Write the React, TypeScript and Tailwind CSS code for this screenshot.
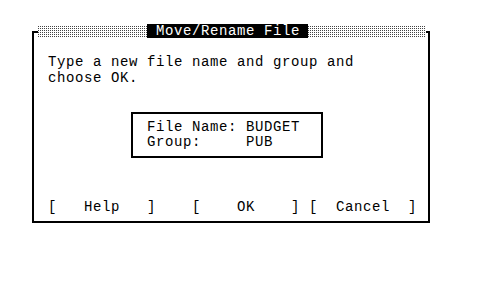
const mono = { fontFamily: '"Liberation Mono", "DejaVu Sans Mono", monospace' };

const Dots = ({ className }: { className: string }) => (
  <div
    className={
      "h-[12px] bg-[linear-gradient(#ffffff_50%,transparent_50%),linear-gradient(90deg,#444444_50%,#ffffff_50%)] bg-[length:2px_2px] " +
      className
    }
  />
);

export default function App() {
  return (
    <div className="w-[483px] h-[291px] bg-white overflow-hidden pt-[31px] pl-[32px]" style={mono}>
      <div className="w-[398px] h-[192px] border-x-2 border-b-2 border-black flex flex-col text-[14px] tracking-[0.6px] text-black">
        {/* title bar */}
        <div className="flex items-center h-[14px] -mt-[7px]">
          <div className="self-start mt-[7px] w-[4px] h-[2px] bg-black" />
          <Dots className="w-[109px]" />
          <div className="h-[14px] w-[161px] bg-black text-white leading-[14px] whitespace-pre">
            {" Move/Rename File "}
          </div>
          <Dots className="flex-1" />
          <div className="self-start mt-[7px] w-[2px] h-[2px] bg-black" />
        </div>

        <div className="pl-[14px] pt-[16px] leading-[16px] whitespace-pre">
          <div>Type a new file name and group and</div>
          <div>choose OK.</div>
        </div>

        <div className="ml-[97px] mt-[26px] w-[192px] h-[46px] border-2 border-black pl-[14px] pt-[6px] leading-[15px] whitespace-pre">
          <div>File Name: BUDGET</div>
          <div>{"Group:     PUB"}</div>
        </div>

        <div className="pl-[14px] mt-[41px] leading-[16px] whitespace-pre">
          {"[   Help   ]    [    OK    ] [  Cancel  ]"}
        </div>
      </div>
    </div>
  );
}
